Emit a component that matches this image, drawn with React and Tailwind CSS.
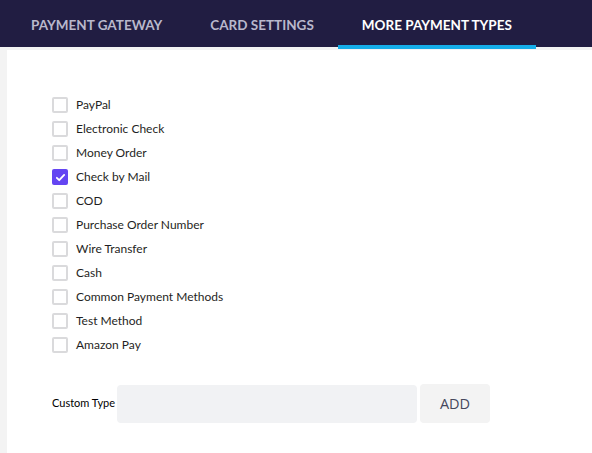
import React, { useState } from "react";

const items = [
  "PayPal",
  "Electronic Check",
  "Money Order",
  "Check by Mail",
  "COD",
  "Purchase Order Number",
  "Wire Transfer",
  "Cash",
  "Common Payment Methods",
  "Test Method",
  "Amazon Pay",
];

export default function App() {
  const [checked, setChecked] = useState({ "Check by Mail": true });
  return (
    <div className="w-[592px] h-[453px] bg-[#f3f3f3] overflow-hidden" style={{ fontFamily: "Lato, 'Open Sans', sans-serif" }}>
      <div className="h-[47px] bg-[#211d42] flex pl-[7px] relative z-10">
        {["PAYMENT GATEWAY", "CARD SETTINGS", "MORE PAYMENT TYPES"].map((t, i) => (
          <div key={t} className="relative px-6 flex items-center h-full pt-[4px]">
            <span className={`text-[13.5px] font-bold ${i === 2 ? "text-white" : "text-[#b9b8cc]"}`}>{t}</span>
            {i === 2 && <div className="absolute left-0 right-0 top-[45px] h-[4px] bg-[#15ade8]" />}
          </div>
        ))}
      </div>
      <div className="ml-[7px] mt-[3px] bg-white h-[403px] pl-[45px] pt-[43px]">
        <div className="flex flex-col">
          {items.map((it) => (
            <label key={it} className="flex items-center h-[24px] gap-[8px] cursor-pointer" onClick={() => setChecked({ ...checked, [it]: !checked[it] })}>
              {checked[it] ? (
                <span className="w-[16px] h-[16px] rounded-[2px] bg-[#6445f2] flex items-center justify-center">
                  <svg width="11" height="11" viewBox="0 0 12 12"><path d="M2 6.3l2.6 2.6L10 3.2" fill="none" stroke="white" strokeWidth="2" strokeLinecap="round" strokeLinejoin="round" /></svg>
                </span>
              ) : (
                <span className="w-[16px] h-[16px] rounded-[2px] border-2 border-[#dadadc] bg-white" />
              )}
              <span className="text-[12px] text-[#1f1f24]">{it}</span>
            </label>
          ))}
        </div>
        <div className="flex items-center mt-[27px]">
          <span className="text-[11px] text-black w-[65px]">Custom Type</span>
          <div className="w-[300px] h-[38px] bg-[#f1f2f4] rounded-[4px]" />
          <button className="ml-[3px] w-[70px] h-[39px] bg-[#f3f3f3] rounded-[4px] text-[14.5px] text-[#45475c] font-medium" style={{ fontFamily: "'Open Sans', sans-serif" }}>ADD</button>
        </div>
      </div>
    </div>
  );
}
